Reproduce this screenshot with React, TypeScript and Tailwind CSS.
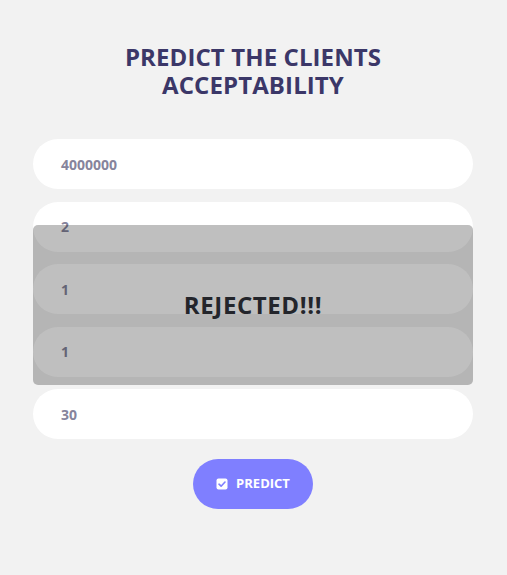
import React from "react";

const inputs = ["4000000", "2", "1", "1", "30"];

export default function App() {
  return (
    <div className="min-h-[575px] w-full bg-[#f2f2f2]" style={{ fontFamily: '"Open Sans", "Liberation Sans", sans-serif' }}>
      <div className="ml-[33px] flex w-[440px] flex-col items-center pt-[43px]">
        <h1 className="text-center text-[24px] font-bold uppercase leading-[28px] tracking-[0.1px] text-[#3b3768]">
          Predict the clients
          <br />
          acceptability
        </h1>
        <div className="relative mt-[40px] flex w-full flex-col gap-[12.5px]">
          {inputs.map((v, i) => (
            <div key={i} className="flex h-[50px] w-full items-center rounded-[25px] bg-white pl-[28px] text-[14px] font-bold text-[#86849c]">
              {v}
            </div>
          ))}
          <div className="absolute left-0 top-[86px] flex h-[160px] w-full items-center justify-center rounded-[5px] bg-black/25">
            <span className="text-[24px] font-bold tracking-[0.6px] text-[#23252b]">REJECTED!!!</span>
          </div>
        </div>
        <button className="mt-[20px] flex h-[50px] w-[120px] items-center justify-center gap-[8px] rounded-[25px] bg-[#7f7fff] text-[13px] font-bold text-white">
          <svg width="12" height="12" viewBox="0 0 12 12">
            <rect x="0.5" y="0.5" width="11" height="11" rx="2" fill="white" />
            <path d="M3 6.2 L5.1 8.2 L9 4" stroke="#7f7fff" strokeWidth="1.6" fill="none" strokeLinecap="round" strokeLinejoin="round" />
          </svg>
          PREDICT
        </button>
      </div>
    </div>
  );
}
